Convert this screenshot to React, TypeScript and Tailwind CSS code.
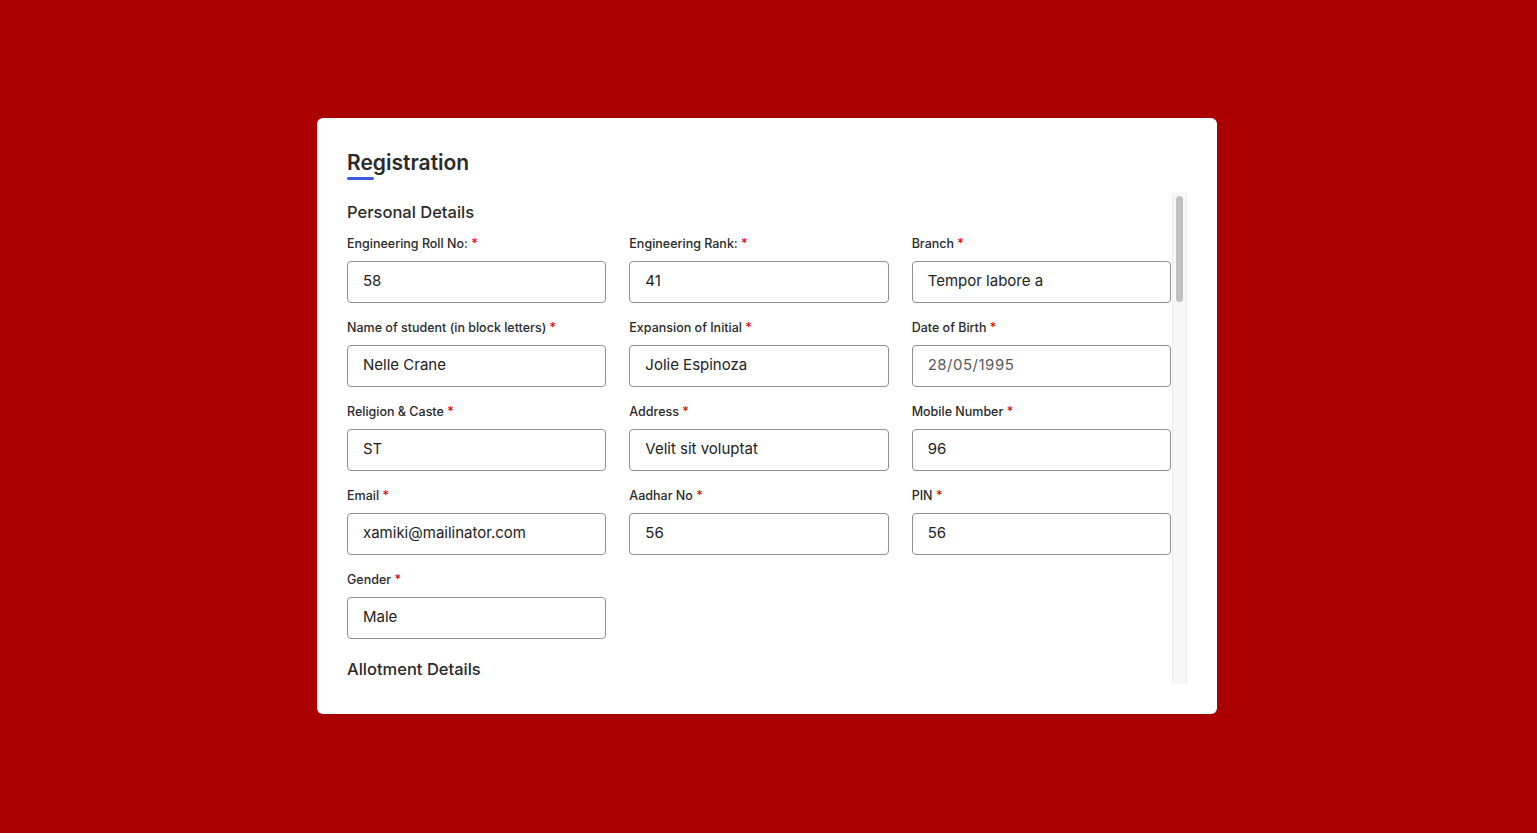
const fields = [
  { label: "Engineering Roll No:", value: "58" },
  { label: "Engineering Rank:", value: "41" },
  { label: "Branch", value: "Tempor labore a" },
  { label: "Name of student (in block letters)", value: "Nelle Crane" },
  { label: "Expansion of Initial", value: "Jolie Espinoza" },
  { label: "Date of Birth", value: "28/05/1995", muted: true },
  { label: "Religion & Caste", value: "ST" },
  { label: "Address", value: "Velit sit voluptat" },
  { label: "Mobile Number", value: "96" },
  { label: "Email", value: "xamiki@mailinator.com" },
  { label: "Aadhar No", value: "56" },
  { label: "PIN", value: "56" },
  { label: "Gender", value: "Male" },
];

const Field = ({ label, value, muted }: { label: string; value: string; muted?: boolean }) => (
  <div className="flex flex-col">
    <label className="text-[12.5px] leading-[18px] font-medium text-[#2a2a2a] mb-[8px]">
      {label} <span className="text-[#e00000]">*</span>
    </label>
    <input
      readOnly
      value={value}
      className={
        "h-[42px] w-full rounded-[4px] border border-[#8f8f8f] bg-white px-[15px] pb-[3px] text-[15px] outline-none " +
        (muted ? "text-[#5a5a5a] tracking-[0.5px]" : "text-[#222]")
      }
    />
  </div>
);

export default function App() {
  return (
    <div
      className="min-h-screen w-full bg-[#aa0000] flex items-center justify-center pr-[3px] pb-[1px]"
      style={{ fontFamily: "Inter, 'Open Sans', sans-serif" }}
    >
      <div className="w-[900px] h-[596px] bg-white rounded-[6px] p-[30px] flex flex-col">
        {/* Heading */}
        <h2 className="text-[21px] leading-[29px] font-semibold text-[#2a2a2a]">Registration</h2>
        <div className="w-[27px] h-[3px] bg-[#3b5bdb] rounded-full" />

        {/* Scroll area */}
        <div className="mt-[13px] flex-1 flex min-h-0">
          <div className="flex-1 overflow-hidden pr-[1px]">
            <h3 className="pt-[7px] text-[16.5px] leading-[24px] font-medium text-[#2a2a2a]">
              Personal Details
            </h3>
            <div className="mt-[11px] grid grid-cols-3 gap-x-[23px] gap-y-[16px]">
              {fields.map((f) => (
                <Field key={f.label} {...f} />
              ))}
            </div>
            <h3 className="mt-[18px] text-[16.5px] leading-[24px] font-medium text-[#2a2a2a]">
              Allotment Details
            </h3>
          </div>

          {/* Scrollbar */}
          <div className="w-[15px] bg-[#f7f7f7] border-x border-[#ececec] pt-[3px] px-[3px]">
            <div className="h-[106px] w-full rounded-full bg-[#c1c1c1]" />
          </div>
        </div>
      </div>
    </div>
  );
}
